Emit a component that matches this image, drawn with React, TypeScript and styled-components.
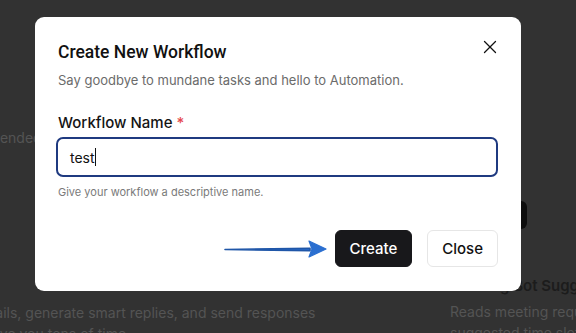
import styled, { createGlobalStyle } from 'styled-components';
import { X } from 'lucide-react';

const GlobalStyle = createGlobalStyle`
  * { box-sizing: border-box; }
  body {
    margin: 0;
    font-family: Inter, "Noto Sans", sans-serif;
    background: #323232;
  }
`;

const Page = styled.div`
  position: relative;
  width: 576px;
  height: 333px;
  overflow: hidden;
  background: #323232;
`;

const Behind = styled.div`
  display: grid;
  grid-template-columns: 420px minmax(0, 1fr);
  column-gap: 30px;
  padding-top: 127px;
`;

const Column = styled.div`
  display: flex;
  flex-direction: column;
  min-width: 0;
`;

const Faint = styled.p<{ shift?: number }>`
  margin: 0;
  margin-left: ${(p) => -(p.shift ?? 0)}px;
  font-size: 14px;
  line-height: 21px;
  color: #545454;
  white-space: nowrap;
`;

const CardTitle = styled.h3`
  margin: 0 0 5px;
  font-size: 15px;
  font-weight: 600;
  line-height: 21px;
  color: #1c1c1c;
  white-space: nowrap;
`;

const DarkButton = styled.div`
  align-self: flex-end;
  width: 80px;
  height: 28px;
  margin: 53px 49px 46px 0;
  border-radius: 6px;
  background: #0d0d0d;
`;

const Spacer = styled.div<{ h: number }>`
  height: ${(p) => p.h}px;
`;

const Modal = styled.div`
  position: absolute;
  left: 35px;
  top: 17px;
  width: 486px;
  height: 274px;
  padding: 23px 23px 24px;
  border-radius: 9px;
  background: #ffffff;
  display: flex;
  flex-direction: column;
`;

const Header = styled.div`
  display: flex;
  align-items: flex-start;
  justify-content: space-between;
`;

const Title = styled.h2`
  margin: 0;
  font-family: Roboto, Inter, sans-serif;
  font-size: 17.5px;
  font-weight: 500;
  line-height: 24px;
  color: #111111;
`;

const CloseIcon = styled.button`
  border: none;
  background: transparent;
  padding: 0;
  margin: -4px -3px 0 0;
  width: 22px;
  height: 22px;
  display: flex;
  color: #111111;
`;

const Subtitle = styled.p`
  margin: 7px 0 0;
  font-size: 13px;
  line-height: 18px;
  color: #6b6b6b;
`;

const Label = styled.label`
  margin-top: 24px;
  font-size: 15px;
  font-weight: 500;
  line-height: 20px;
  color: #141414;
  span {
    color: #e5484d;
    margin-left: 4px;
  }
`;

const Input = styled.div`
  margin: 4px 0 0 -2px;
  height: 40px;
  border: 2px solid #1f3a80;
  border-radius: 7px;
  padding: 0 12px;
  display: flex;
  align-items: center;
  font-size: 14px;
  color: #111111;
  &::after {
    content: '';
    width: 1px;
    height: 18px;
    background: #111111;
  }
`;

const Helper = styled.p`
  margin: 7px 0 0;
  font-size: 11px;
  line-height: 16px;
  color: #7a7a7a;
`;

const Actions = styled.div`
  margin-top: auto;
  display: flex;
  align-items: center;
  justify-content: flex-end;
  gap: 15px;
`;

const Pointer = styled.svg`
  margin-right: -8px;
`;

const Button = styled.button<{ primary?: boolean }>`
  height: 37px;
  padding: 0 14px;
  border-radius: 6px;
  font-family: inherit;
  font-size: 15px;
  font-weight: 500;
  border: 1px solid ${(p) => (p.primary ? '#18181b' : '#e6e6e6')};
  background: ${(p) => (p.primary ? '#18181b' : '#ffffff')};
  color: ${(p) => (p.primary ? '#ffffff' : '#111111')};
`;

export default function App() {
  return (
    <>
      <GlobalStyle />
      <Page>
        <Behind>
          <Column>
            <Faint shift={58}>Recommended</Faint>
            <Spacer h={154} />
            <Faint shift={70}>Reads emails, generate smart replies, and send responses</Faint>
            <Faint shift={32}>to save you tons of time.</Faint>
          </Column>
          <Column>
            <Spacer h={21} />
            <DarkButton />
            <CardTitle>Meeting Bot Suggestions</CardTitle>
            <Faint>Reads meeting requests and</Faint>
            <Faint>suggested time slots</Faint>
          </Column>
        </Behind>

        <Modal>
          <Header>
            <Title>Create New Workflow</Title>
            <CloseIcon aria-label="close">
              <X size={22} strokeWidth={1.4} />
            </CloseIcon>
          </Header>
          <Subtitle>Say goodbye to mundane tasks and hello to Automation.</Subtitle>
          <Label>
            Workflow Name<span>*</span>
          </Label>
          <Input>test</Input>
          <Helper>Give your workflow a descriptive name.</Helper>
          <Actions>
            <Pointer width="104" height="20" viewBox="0 0 104 20">
              <defs>
                <linearGradient id="arrowFill" x1="0" x2="1" y1="0" y2="0">
                  <stop offset="0" stopColor="#1f4f9c" />
                  <stop offset="1" stopColor="#2b6fd0" />
                </linearGradient>
              </defs>
              <path d="M1 10.5 L86 9.2 L86 11.8 Z" fill="url(#arrowFill)" stroke="#1f56a8" strokeWidth="1.6" strokeLinejoin="round" />
              <path d="M85 2 L102 10 L85 18 L88 10 Z" fill="#2b6fd0" stroke="#2b6fd0" strokeLinejoin="round" strokeWidth="1.2" />
            </Pointer>
            <Button primary>Create</Button>
            <Button>Close</Button>
          </Actions>
        </Modal>
      </Page>
    </>
  );
}
